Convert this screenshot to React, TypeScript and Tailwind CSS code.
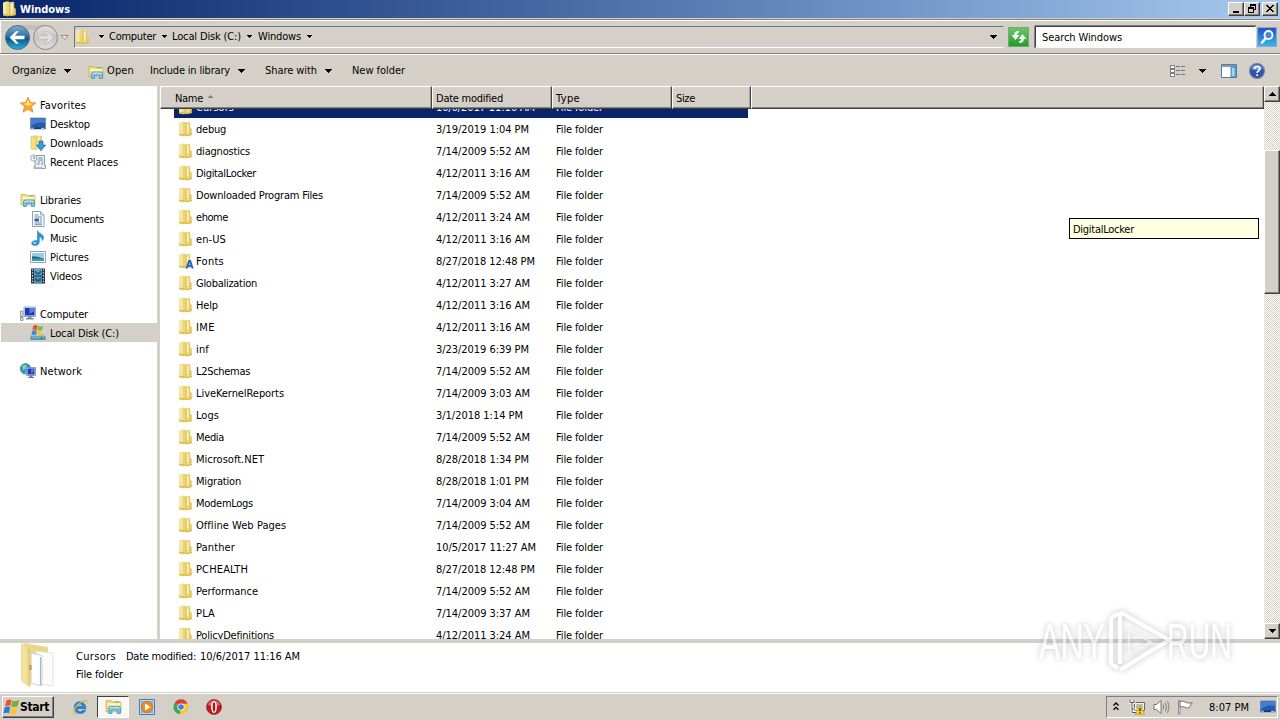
import { useLayoutEffect, useRef, useState } from 'react'
import type { ReactNode } from 'react'

const folders = [
  { name: 'Cursors', w: 38, date: '10/6/2017 11:16 AM', dw: 99, selected: true },
  { name: 'debug', w: 30, date: '3/19/2019 1:04 PM', dw: 93 },
  { name: 'diagnostics', w: 54, date: '7/14/2009 5:52 AM', dw: 94 },
  { name: 'DigitalLocker', w: 60, date: '4/12/2011 3:16 AM', dw: 94 },
  { name: 'Downloaded Program Files', w: 127, date: '7/14/2009 5:52 AM', dw: 94 },
  { name: 'ehome', w: 32, date: '4/12/2011 3:24 AM', dw: 94 },
  { name: 'en-US', w: 30, date: '4/12/2011 3:16 AM', dw: 94 },
  { name: 'Fonts', w: 28, date: '8/27/2018 12:48 PM', dw: 99, font: true },
  { name: 'Globalization', w: 61, date: '4/12/2011 3:27 AM', dw: 94 },
  { name: 'Help', w: 22, date: '4/12/2011 3:16 AM', dw: 94 },
  { name: 'IME', w: 19, date: '4/12/2011 3:16 AM', dw: 94 },
  { name: 'inf', w: 13, date: '3/23/2019 6:39 PM', dw: 93 },
  { name: 'L2Schemas', w: 54, date: '7/14/2009 5:52 AM', dw: 94 },
  { name: 'LiveKernelReports', w: 88, date: '7/14/2009 3:03 AM', dw: 94 },
  { name: 'Logs', w: 23, date: '3/1/2018 1:14 PM', dw: 87 },
  { name: 'Media', w: 28, date: '7/14/2009 5:52 AM', dw: 94 },
  { name: 'Microsoft.NET', w: 68, date: '8/28/2018 1:34 PM', dw: 93 },
  { name: 'Migration', w: 45, date: '8/28/2018 1:01 PM', dw: 93 },
  { name: 'ModemLogs', w: 57, date: '7/14/2009 3:04 AM', dw: 94 },
  { name: 'Offline Web Pages', w: 90, date: '7/14/2009 5:52 AM', dw: 94 },
  { name: 'Panther', w: 39, date: '10/5/2017 11:27 AM', dw: 100 },
  { name: 'PCHEALTH', w: 52, date: '8/27/2018 12:48 PM', dw: 99 },
  { name: 'Performance', w: 62, date: '7/14/2009 5:52 AM', dw: 94 },
  { name: 'PLA', w: 19, date: '7/14/2009 3:37 AM', dw: 94 },
  { name: 'PolicyDefinitions', w: 78, date: '4/12/2011 3:24 AM', dw: 94 },
]

type LabelProps = { w: number; children: string; className?: string; high?: boolean }

// Keeps every label at a fixed width by spreading its letters
function Label({ w, children, className = '', high }: LabelProps) {
  const ref = useRef<HTMLSpanElement>(null)
  const [spacing, setSpacing] = useState(0)

  useLayoutEffect(() => {
    if (!ref.current) return
    const natural = ref.current.getBoundingClientRect().width
    setSpacing((w - natural) / children.length)
  }, [w, children])

  return (
    <span
      ref={ref}
      className={`inline-block whitespace-pre ${high ? '' : 'pt-[2px]'} ${className}`}
      style={{ letterSpacing: `${spacing}px` }}
    >
      {children}
    </span>
  )
}

function Caret({ small }: { small?: boolean }) {
  return small ? (
    <svg width="5" height="3" viewBox="0 0 5 3" shapeRendering="crispEdges"><path d="M0 0h5v1H4v1H3v1H2V2H1V1H0z" /></svg>
  ) : (
    <svg width="7" height="4" viewBox="0 0 7 4" shapeRendering="crispEdges"><path d="M0 0h7v1H6v1H5v1H4v1H3V3H2V2H1V1H0z" /></svg>
  )
}

function FolderIcon({ font, size = 16 }: { font?: boolean; size?: number }) {
  return (
    <svg width={size} height={size} viewBox="0 0 16 16" className="shrink-0">
      <path d="M1 1.500 5.500.3 7.500 1v13.500l-2 .7L1 14.200z" fill="#f6e8a4" />
      <path d="M4.500 1 7.500 1v13.500l-3 .3z" fill="#ebd67c" />
      <path d="M1 12.500 7.500 13.500v1l-2 .7L1 14.200z" fill="#dcc052" />
      <path d="M7.500 1.500 11 .8l1 .5V14l-4.500 1.200z" fill="#f0dc84" />
      <path d="M7.500 1.500 8.300 1.300V15l-.8.2z" fill="#d0b248" />
      <path d="M11 1.500 12.200 1.500v5l1.600 1.500v6l-2.800.6z" fill="#e2ca66" />
      <path d="M9 3h1.500v8H9z" fill="#faf2bd" />
      <path d="m8 15.200 5.800-1.200v-1L8 14z" fill="#d6b53d" />
      {font && <path d="m7.500 15.500 3-8.500h2.200l3 8.500h-2l-.6-1.800h-3l-.6 1.800zM10.700 12h1.800l-.9-2.700z" fill="#1f62c9" />}
    </svg>
  )
}

function LibraryIcon({ size = 16 }: { size?: number }) {
  return (
    <svg width={size} height={size} viewBox="0 0 16 16" className="shrink-0">
      <path d="M1 2.500h5l1 1.300h8V13H1z" fill="#f1db76" stroke="#c9a94a" strokeWidth=".7" />
      <path d="M2 4.800h12.400V7H2z" fill="#fbf4c4" />
      <path d="M9 3.200h4.500v1H9z" fill="#79b850" />
      <path d="M3.500 14.500V9.800Q3.500 8 5.500 8h7q2 0 2 1.800v4.700h-3v-3.200h-5v3.200z" fill="#74c3e8" stroke="#3d8dbd" strokeWidth=".7" />
      <path d="M4.500 9.500q4-1 9 0" stroke="#d5f1fb" fill="none" />
    </svg>
  )
}

function StarIcon() {
  return (
    <svg width="16" height="16" viewBox="0 0 16 16">
      <path d="m8 .4 2.200 5.100 5.500.5-4.200 3.600 1.400 5.500L8 12.200l-4.900 2.900 1.400-5.500L.3 6l5.500-.5z" fill="#fbae2c" stroke="#e0801c" strokeWidth=".8" />
      <path d="M8 2.500 9.500 6.500l4 .3-5 1.700-5.500-1.700 3.500-.3z" fill="#ffe794" />
    </svg>
  )
}

function DesktopIcon() {
  return (
    <svg width="16" height="16" viewBox="0 0 16 16">
      <path d="M.5 2h15v11H.5z" fill="#2459ad" stroke="#6d87ad" strokeWidth=".8" />
      <path d="M1 2.500h14V7Q7 5 1 10z" fill="#427fd1" />
      <path d="M1 11.500h14V13H1z" fill="#18386f" />
      <path d="M1 11.500h3V13H1z" fill="#5eb5e2" />
      <path d="M11 11.800h3.500v1H11z" fill="#d0def0" />
    </svg>
  )
}

function DownloadsIcon() {
  return (
    <svg width="16" height="16" viewBox="0 0 16 16">
      <path d="M1 1.500 6 .5v14l-5-.5z" fill="#f3df87" stroke="#cfb14d" strokeWidth=".5" />
      <path d="M6 1h6v12.500L6 14.500z" fill="#e9cf67" />
      <path d="M7.500 2.500 10 1v12l-2.500 1z" fill="#faeeae" />
      <path d="M9 6h4v4h2.700L11 15.700 6.500 10H9z" fill="#349be1" stroke="#1567ac" strokeWidth=".7" />
    </svg>
  )
}

function RecentIcon() {
  return (
    <svg width="16" height="16" viewBox="0 0 16 16">
      <path d="M5 1.500h9.500v10h1V14.500H4v-2h1z" fill="#e6edf4" stroke="#758595" strokeWidth=".8" />
      <path d="M8.500 4h4M8 6h5M8 8h2M11.500 8h1.500M7 10h2.500M11 10h2" stroke="#6e8599" strokeWidth=".9" />
      <circle cx="3.800" cy="4" r="3.200" fill="#f4f7fa" stroke="#8494a5" strokeWidth=".8" />
      <path d="M3.800 2v2.200h1.500" fill="none" stroke="#506478" strokeWidth=".8" />
      <path d="M4 13h8.500v1.500H4z" fill="#b4c4d2" />
    </svg>
  )
}

function DocumentsIcon() {
  return (
    <svg width="16" height="16" viewBox="0 0 16 16">
      <path d="M2.500.5h8l3.500 3.500v11.500H2.500z" fill="#fafcff" stroke="#7e96ad" strokeWidth=".9" />
      <path d="M10.500.5V4H14" fill="#cddcec" stroke="#7e96ad" strokeWidth=".7" />
      <path d="M4.500 4h4M4.500 6h7.500M4.500 12h7.500M4.500 13.700h7.500M10 8h2M10 10h2" stroke="#5b85b0" strokeWidth=".9" />
      <path d="M4.500 7.500h4.500v3H4.500z" fill="#31679f" />
    </svg>
  )
}

function MusicIcon() {
  return (
    <svg width="16" height="16" viewBox="0 0 16 16">
      <path d="M7.500.5c.5 3 6 3.500 6 7 0 1.500-.8 2.500-1.500 3.200.6-2.700-1-3.400-2.700-3.900V12c0 2.500-2 3.500-4.300 3.500s-3.300-1-3.300-2.300c0-1.700 2.700-3.200 5.800-2.400z" fill="#2f94d6" stroke="#1e6fae" strokeWidth=".5" />
      <ellipse cx="4.700" cy="12.800" rx="1.800" ry="1.100" fill="#8bd0f5" />
    </svg>
  )
}

function PicturesIcon() {
  return (
    <svg width="16" height="16" viewBox="0 0 16 16">
      <path d="M.5 2.500h15v11H.5z" fill="#fff" stroke="#8297a8" strokeWidth=".9" />
      <path d="M2 4h12v8H2z" fill="#91cfeb" />
      <path d="M2 7.500q5-1 12 2.500H2z" fill="#1e6d73" />
      <path d="M2 9.500h12V12H2z" fill="#3b9cae" />
    </svg>
  )
}

function VideosIcon() {
  return (
    <svg width="16" height="16" viewBox="0 0 16 16">
      <path d="M1 .5h14v15H1z" fill="#25303c" />
      <path d="M4 1h8v6.500H4z" fill="#5aa6cf" />
      <path d="M4 8.500h8V15H4z" fill="#4a96c8" />
      <path d="m5 2 3 3 3-3v3L8 7 5 5zM5 9.500l3 2 3-2v3L8 14l-3-1.500z" fill="#2c5c7c" />
      <path d="M2.500 1.500v13.500M13.500 1.500v13.500" stroke="#e7edf2" strokeWidth="1.200" strokeDasharray="1.300 1.500" />
    </svg>
  )
}

function ComputerIcon() {
  return (
    <svg width="16" height="16" viewBox="0 0 16 16">
      <path d="M.5 5h2.500v9.500H.5z" fill="#d4dbd9" stroke="#7d8a90" strokeWidth=".7" />
      <path d="M1 10h1.600v2H1z" fill="#55a45e" />
      <path d="M4 1h11.500v9.500H4z" fill="#dfe4f0" stroke="#8994b0" strokeWidth=".8" />
      <path d="M5 2h9.500v7.500H5z" fill="#1f36b8" />
      <path d="M9.500 2h5v3l-5 3z" fill="#5b7ee4" />
      <path d="M8 10.500h3.500v1.500h2v1.500h-7.500V12H8z" fill="#7d89a0" />
    </svg>
  )
}

function DiskIcon() {
  return (
    <svg width="16" height="16" viewBox="0 0 16 16">
      <path d="m2 9-1.500 3v2.500h15V12L13.500 9z" fill="#a5c1cc" />
      <path d="M.5 11.500h15v3.300H.5z" fill="#3f87a2" />
      <path d="M1.500 12.500h9v.8h-9z" fill="#a9dbe9" />
      <path d="M12.500 12.300h1.800v1.200h-1.800z" fill="#7be07a" />
      <path d="M3.200.8Q5.700-.6 7.700.7L6.900 5Q4.900 4 2.400 5.200z" fill="#e2562a" />
      <path d="M8.500 1q2.200 1 4.500-.3L12.200 5q-2.300 1.300-4.500.3z" fill="#7fba3b" />
      <path d="M2.200 6q2.300-1.200 4.500-.2L5.900 10Q3.900 9 1.400 10.200z" fill="#3a86d8" />
      <path d="M7.500 6.200q2.200 1 4.500-.2l-.8 4.200q-2.300 1.300-4.500.2z" fill="#f7c52f" />
    </svg>
  )
}

function NetworkIcon() {
  return (
    <svg width="16" height="16" viewBox="0 0 16 16">
      <circle cx="5.500" cy="5.800" r="5.200" fill="#3095c8" stroke="#1f6f9f" strokeWidth=".6" />
      <path d="M2 3q3-2.500 5 0L5.500 6 3 7zM5 8l2 1-1.500 2z" fill="#7dd392" />
      <path d="M6.500 4.500h9v8h-9z" fill="#dde4f1" stroke="#7785a6" strokeWidth=".8" />
      <path d="M7.500 5.500h7v6h-7z" fill="#1c35bb" />
      <path d="M11 5.500h3.500V8L11 11z" fill="#4b76df" />
      <path d="M9.500 12.500h3V14h1.500v1H8v-1h1.500z" fill="#6e7c95" />
    </svg>
  )
}

function WindowsFlag() {
  return (
    <svg width="17" height="16" viewBox="0 0 17 16" className="shrink-0">
      <path d="M3.500 1.300Q6-.2 8.600 1.200L7.400 7Q5 6 2.100 7.300z" fill="#e8582a" />
      <path d="M9.500 1.600q2.700 1.300 6.700-.6l-1.500 6.300q-3.200 1.500-6.400.2z" fill="#72b33a" />
      <path d="M1.900 8.300q2.800-1.300 5.300-.2L6 14.200Q3.500 13 .3 14.500z" fill="#2f7bd3" />
      <path d="M8 8.600q3 1.300 6.400-.2L13.100 14.500q-3.200 1.700-6.400.3z" fill="#f8c62c" />
    </svg>
  )
}

type SideRow = { label: string; w: number; icon: ReactNode; root?: boolean; active?: boolean }

const sidebar: SideRow[][] = [
  [
    { label: 'Favorites', w: 46, icon: <StarIcon />, root: true },
    { label: 'Desktop', w: 40, icon: <DesktopIcon /> },
    { label: 'Downloads', w: 53, icon: <DownloadsIcon /> },
    { label: 'Recent Places', w: 68, icon: <RecentIcon /> },
  ],
  [
    { label: 'Libraries', w: 41, icon: <LibraryIcon />, root: true },
    { label: 'Documents', w: 54, icon: <DocumentsIcon /> },
    { label: 'Music', w: 27, icon: <MusicIcon /> },
    { label: 'Pictures', w: 39, icon: <PicturesIcon /> },
    { label: 'Videos', w: 32, icon: <VideosIcon /> },
  ],
  [
    { label: 'Computer', w: 48, icon: <ComputerIcon />, root: true },
    { label: 'Local Disk (C:)', w: 69, icon: <DiskIcon />, active: true },
  ],
  [{ label: 'Network', w: 42, icon: <NetworkIcon />, root: true }],
]

const raised = 'border border-t-white border-l-white border-r-[#404040] border-b-[#404040] bg-[#d4d0c8] shadow-[inset_-1px_-1px_0_#808080]'

function TitleBar() {
  return (
    <div className="flex h-[18px] items-center bg-linear-to-r from-[#0a246a] to-[#a6caf0] pl-[2px] pr-0.5">
      <FolderIcon />
      <Label w={50} className="ml-[2px] text-[11px] font-bold text-white">Windows</Label>
      <div className="ml-auto flex">
        <div className={`flex h-[14px] w-4 items-center justify-center ${raised}`}>
          <svg width="12" height="10" viewBox="0 0 12 10" shapeRendering="crispEdges"><path d="M3 7h6v2H3z" /></svg>
        </div>
        <div className={`flex h-[14px] w-4 items-center justify-center ${raised}`}>
          <svg width="12" height="10" viewBox="0 0 12 10" shapeRendering="crispEdges">
            <path d="M4 0h6v6H8V5h1V2H5v1H4zM2 3h6v6H2zm1 2v3h4V5z" fillRule="evenodd" />
          </svg>
        </div>
        <div className={`ml-0.5 flex h-[14px] w-4 items-center justify-center ${raised}`}>
          <svg width="12" height="10" viewBox="0 0 12 10" shapeRendering="crispEdges">
            <path d="M2 1h2v1h1v1h2V2h1V1h2v1H9v1H8v1H7v1h1v1h1v1h1v1H8V7H7V6H5v1H4v1H2V7h1V6h1V5h1V4H4V3H3V2H2z" />
          </svg>
        </div>
      </div>
    </div>
  )
}

function AddressBar() {
  return (
    <div className="flex h-9 items-center border-t border-b border-t-[#808080] border-b-white shadow-[inset_0_1px_0_#fff,inset_0_-1px_0_#808080,inset_1px_0_0_#fff] pl-1">
      <svg width="66" height="28" viewBox="0 0 66 28" className="shrink-0">
        <defs>
          <linearGradient id="back" x1="0" y1="0" x2="0" y2="1">
            <stop offset="0" stopColor="#86a9c6" />
            <stop offset=".48" stopColor="#2872a7" />
            <stop offset=".52" stopColor="#095287" />
            <stop offset="1" stopColor="#29b3dd" />
          </linearGradient>
          <linearGradient id="forward" x1="0" y1="0" x2="0" y2="1">
            <stop offset="0" stopColor="#e4e2df" />
            <stop offset=".5" stopColor="#c6c4c2" />
            <stop offset="1" stopColor="#e2e0dc" />
          </linearGradient>
        </defs>
        <path d="M14 2h28v5H14z" fill="#c2c0bc" />
        <circle cx="13.500" cy="14.500" r="12" fill="url(#back)" stroke="#526b80" />
        <path d="M5.500 14.500 12 8.300h2.800l-3.900 4.500h9.600v3.400h-9.600l3.900 4.500H12z" fill="#fff" />
        <circle cx="41.500" cy="14.500" r="12" fill="url(#forward)" stroke="#8c8a88" />
        <path d="m49.500 14.500-6.500-6.200h-2.800l3.900 4.500h-9.600v3.400h9.600l-3.900 4.500H43z" fill="#e4e2e0" stroke="#b6b4b2" strokeWidth=".6" />
        <path d="M57 12.500h7l-3.500 4z" fill="#eee" stroke="#777" strokeWidth=".8" />
      </svg>
      <div className="ml-1 flex h-[22px] w-[930px] items-center border border-t-[#69778a] border-l-[#69778a] border-b-white border-r-[#d4d0c8]">
        <FolderIcon />
        <span className="mb-px ml-2"><Caret small /></span>
        <Label high w={47} className="ml-[5px]">Computer</Label>
        <span className="mb-px ml-[6px]"><Caret small /></span>
        <Label high w={69} className="ml-[5px]">Local Disk (C:)</Label>
        <span className="mb-px ml-[6px]"><Caret small /></span>
        <Label high w={43} className="ml-[6px]">Windows</Label>
        <span className="mb-px ml-[6px]"><Caret small /></span>
        <span className="ml-auto mr-[6px]"><Caret /></span>
      </div>
      <div className="ml-1 flex h-5 w-[21px] items-center justify-center border border-[#76a876] bg-linear-to-b from-[#6bc36b] to-[#1d9d23]">
        <svg width="18" height="18" viewBox="0 0 18 18">
          <path d="M9 3Q4.500 2.500 4 7H1.500L5.500 12l4-5H7q.2-2 2-2.500z" fill="#efffec" />
          <path d="M9 15q4.500.5 5-4h2.500L12.500 6l-4 5H11q-.2 2-2 2.500z" fill="#efffec" />
        </svg>
      </div>
      <div className="ml-[6px] flex h-[22px] w-[221px] items-center border border-t-[#404040] border-l-[#404040] border-b-white border-r-white bg-white pl-[6px] shadow-[-1px_0_0_#808080,0_-1px_0_#808080]">
        <Label w={80}>Search Windows</Label>
      </div>
      <div className="ml-px flex h-5 w-5 items-center justify-center border border-[#8ba7d4] bg-linear-to-b from-[#2b4fc0] to-[#37b5ec]">
        <svg width="18" height="18" viewBox="0 0 18 18">
          <path d="m8 10-4 4.500" stroke="#fff" strokeWidth="2.500" strokeLinecap="round" />
          <circle cx="10.500" cy="7" r="4" fill="#4c86d9" stroke="#fff" strokeWidth="1.800" />
        </svg>
      </div>
    </div>
  )
}

function Toolbar() {
  return (
    <div className="flex h-[31px] items-center pl-3">
      <Label high w={44}>Organize</Label>
      <span className="ml-2"><Caret /></span>
      <span className="ml-[17px] mt-0.5"><LibraryIcon /></span>
      <Label high w={27} className="ml-[3px]">Open</Label>
      <Label high w={80} className="ml-4">Include in library</Label>
      <span className="ml-2"><Caret /></span>
      <Label high w={52} className="ml-5">Share with</Label>
      <span className="ml-2"><Caret /></span>
      <Label high w={53} className="ml-5">New folder</Label>
      <div className="ml-auto flex items-center pr-[15px]">
        <svg width="16" height="14" viewBox="0 0 16 14" shapeRendering="crispEdges">
          <path d="M0 1h5v12H0z" fill="#7b8088" />
          <path d="M1 2h3v2H1zM1 6h3v2H1zM1 10h3v2H1z" fill="#fff" />
          <path d="M6 2h4v1H6zM11 2h4v1h-4zM6 6h4v1H6zM11 6h4v1h-4zM6 10h4v1H6zM11 10h4v1h-4z" fill="#6b7785" />
        </svg>
        <span className="ml-[13px]"><Caret /></span>
        <svg width="16" height="14" viewBox="0 0 16 14" className="ml-[15px]">
          <path d="M.5.500h15v13H.5z" fill="#fff" stroke="#507ba5" />
          <path d="M1 1h14v2H1z" fill="#7b9ebd" />
          <path d="M10 3h5v10h-5z" fill="#75bedd" stroke="#3c7c9f" strokeWidth=".8" />
          <path d="M11.500 4h1v8h-1z" fill="#d3effa" />
        </svg>
        <svg width="16" height="16" viewBox="0 0 16 16" className="ml-3">
          <circle cx="8" cy="8" r="7.400" fill="#2f52b5" stroke="#6e7f9d" strokeWidth="1.200" />
          <path d="M2.500 6Q3 2 8 2t5.500 4Q8 8 2.500 6z" fill="#7b9be0" />
          <path d="M5.500 6q0-2.500 2.600-2.500T10.700 6q0 1.200-1.300 2-1.200.6-1.200 2M8.200 11.300v1.600" fill="none" stroke="#fff" strokeWidth="1.700" />
        </svg>
      </div>
    </div>
  )
}

function Sidebar() {
  return (
    <div className="w-[157px] shrink-0 space-y-[19px] bg-white pt-[9px]">
      {sidebar.map((group, g) => (
        <div key={g}>
          {group.map((row) => (
            <div
              key={row.label}
              className={`flex h-[19px] items-center ${row.active ? 'ml-px bg-[#d4d0c8] pl-[29px]' : row.root ? 'pl-5' : 'pl-[30px]'}`}
            >
              {row.icon}
              <Label w={row.w} className="ml-1">{row.label}</Label>
            </div>
          ))}
        </div>
      ))}
    </div>
  )
}

function ColumnHeader({ className, children }: { className: string; children?: ReactNode }) {
  return (
    <div className={`flex h-full items-center border-t border-l border-r border-b border-t-white border-l-white border-r-[#404040] border-b-[#404040] shadow-[inset_0_-1px_0_#808080,inset_-1px_0_0_#a8a59f] ${className}`}>
      {children}
    </div>
  )
}

function FileList() {
  return (
    <div className="flex min-w-0 flex-1 flex-col overflow-hidden bg-white">
      <div className="flex h-[23px] shrink-0 bg-[#d4d0c8]">
        <ColumnHeader className="w-[272px] pl-[14px]">
          <Label w={28}>Name</Label>
          <svg width="5" height="3" viewBox="0 0 5 3" className="mb-[2px] ml-[5px]" shapeRendering="crispEdges">
            <path d="M2 0h1v1h1v1h1v1H0V2h1V1h1z" fill="#808080" />
          </svg>
        </ColumnHeader>
        <ColumnHeader className="w-[120px] pl-[3px]"><Label w={67}>Date modified</Label></ColumnHeader>
        <ColumnHeader className="w-[120px] pl-[3px]"><Label w={24}>Type</Label></ColumnHeader>
        <ColumnHeader className="w-[79px] pl-[3px]"><Label w={19}>Size</Label></ColumnHeader>
        <ColumnHeader className="flex-1" />
      </div>
      <div className="min-h-0 flex-1 overflow-hidden">
        <div className="-mt-[13px] pl-[14px]">
          {folders.map((f) => (
            <div key={f.name} className={`flex h-[22px] w-[574px] items-center pl-1 ${f.selected ? 'bg-[#0a246a] text-white' : ''}`}>
              <div className="flex w-[258px] items-center">
                <span className="mb-px"><FolderIcon font={f.font} /></span>
                <Label w={f.w} className="ml-[2px]">{f.name}</Label>
              </div>
              <div className="flex w-[120px]"><Label w={f.dw}>{f.date}</Label></div>
              <Label w={47}>File folder</Label>
            </div>
          ))}
        </div>
      </div>
    </div>
  )
}

function ScrollBar() {
  return (
    <div className="flex w-4 shrink-0 flex-col bg-[#d4d0c8] bg-[repeating-conic-gradient(#fff_0_25%,#d4d0c8_0_50%)] bg-[length:2px_2px]">
      <div className={`flex h-4 items-center justify-center ${raised}`}>
        <svg width="7" height="4" viewBox="0 0 7 4" shapeRendering="crispEdges"><path d="M3 0h1v1h1v1h1v1h1v1H0V3h1V2h1V1h1z" /></svg>
      </div>
      <div className={`mt-12 h-36 ${raised}`} />
      <div className={`mt-auto flex h-4 items-center justify-center ${raised}`}><Caret /></div>
    </div>
  )
}

function DetailsPane() {
  return (
    <div className="flex h-[49px] bg-white pl-5">
      <svg width="36" height="46" viewBox="0 0 36 46" className="shrink-0">
        <path d="m4 0 24 4v8L10 40z" fill="#ebd78a" />
        <path d="m16 8 17 2v33l-13-2z" fill="#fcfcfc" stroke="#dcdcdc" strokeWidth=".8" />
        <path d="m11 10 9 2q2 .5 2 2v29l-11-3z" fill="#fff" stroke="#c6ced8" strokeWidth=".9" />
        <path d="M20.500 14v28" stroke="#a9b3bf" strokeWidth="1.200" />
        <path d="M1.500.500 10 6v38l-8.500-6z" fill="#f3e29a" stroke="#e3cf80" strokeWidth=".6" />
        <path d="M7.500 4.500 10.500 6v37.500l-3-1.500z" fill="#e4cf80" />
        <path d="M9.500 22h2v5h-2z" fill="#b69544" />
      </svg>
      <div className="ml-5 flex flex-col pt-[4px]">
        <div className="flex h-[18px] items-center">
          <Label w={40}>Cursors</Label>
          <Label w={70} className="ml-[10px]">Date modified:</Label>
          <Label w={100} className="ml-1">10/6/2017 11:16 AM</Label>
        </div>
        <div className="flex h-[18px] items-center"><Label w={47}>File folder</Label></div>
      </div>
    </div>
  )
}

function Taskbar() {
  return (
    <div className="flex h-[28px] items-center border-t border-[#d4d0c8] bg-[#d4d0c8] pl-0.5 pr-0.5 shadow-[inset_0_1px_0_#fff]">
      <div className={`flex h-[22px] w-[52px] items-center ${raised}`}>
        <WindowsFlag />
        <Label high w={29} className="pt-px text-[12px] font-bold">Start</Label>
      </div>
      <svg width="16" height="16" viewBox="0 0 16 16" className="ml-[18px]">
        <path d="M14 9.700H5.300c.3 3.500 4.200 3.700 5.400 1.500h3c-1.800 5-11.500 4.500-11.500-2.700 0-8 11.800-7.800 11.800 1.200zM5.400 7.300h5.300c-.3-3-5-3-5.300 0z" fill="#2a83d5" stroke="#145aa5" strokeWidth=".5" />
        <path d="M14.800 4.500c1.200-3-1.500-4.200-6.300-1C4 6.500.5 12.500 2 14.300c.8 1 2.500.2 3.500-.4" fill="none" stroke="#d6bd42" strokeWidth="1.200" />
      </svg>
      <div className="ml-[9px] flex h-[22px] w-8 items-center justify-center border border-t-[#404040] border-l-[#404040] border-b-white border-r-white bg-[repeating-conic-gradient(#fff_0_25%,#f3f1ee_0_50%)] bg-[length:2px_2px]">
        <LibraryIcon size={17} />
      </div>
      <svg width="16" height="16" viewBox="0 0 16 16" className="ml-[10px]">
        <path d="M.5.500h15v15H.5z" fill="#b6d8f2" stroke="#427fb8" />
        <path d="M2 2h12v12H2z" fill="#83b7e1" />
        <circle cx="8" cy="8" r="5.500" fill="#f28a1c" stroke="#d7670c" strokeWidth=".8" />
        <path d="m6 4.500 5.500 3.500L6 11.500z" fill="#fff" />
      </svg>
      <svg width="16" height="16" viewBox="0 0 16 16" className="ml-[18px]">
        <path d="M8 8 1.500 4.200A7.300 7.300 0 0 1 14.600 4.700z" fill="#da3e31" />
        <path d="M8 8H8L7 15.300A7.300 7.300 0 0 1 1.500 4.200z" fill="#3fa652" />
        <path d="M8 8V4.700h6.600A7.300 7.300 0 0 1 7 15.300z" fill="#f5c92e" />
        <circle cx="8" cy="8" r="3.600" fill="#fff" />
        <circle cx="8" cy="8" r="2.800" fill="#3d7fe4" />
      </svg>
      <svg width="16" height="16" viewBox="0 0 16 16" className="ml-[17px]">
        <circle cx="8" cy="8" r="7.500" fill="#c31a1e" stroke="#8e1014" strokeWidth=".6" />
        <path d="M2 6Q3 1.500 8 1.500T14 6Q8 8 2 6z" fill="#e2696a" />
        <ellipse cx="8" cy="8" rx="2.900" ry="6" fill="#fff" />
        <ellipse cx="8" cy="8" rx="1.300" ry="4.800" fill="#a9161a" />
      </svg>
      <div className="ml-auto flex h-[22px] w-[172px] items-center border border-t-[#808080] border-l-[#808080] border-b-white border-r-white pl-[6px]">
        <svg width="6" height="9" viewBox="0 0 6 9"><path d="m.5 3.500 2.500-2.500 2.500 2.500M.5 7.800l2.500-2.500 2.500 2.500" fill="none" stroke="#000" strokeWidth="1.300" /></svg>
        <svg width="16" height="16" viewBox="0 0 16 16" className="ml-[10px]">
          <path d="M5.500 3.500h10v8h-10z" fill="#f1f1ee" stroke="#666" />
          <path d="M7 5h7v5H7z" fill="#bcbcb8" />
          <path d="M1 .5v3h4v-3M3 3.500v9.500h6M3 10h3" fill="none" stroke="#fff" strokeWidth="2.600" />
          <path d="M1 .5v3h4v-3M3 3.500v10h6M3 10h3" fill="none" stroke="#555" />
          <path d="m11 6.500 4.700 8.800H6.300z" fill="#fbd821" stroke="#b58e09" strokeWidth=".6" />
          <path d="M11 9.300v3M11 13.300v1.200" stroke="#000" strokeWidth="1.200" />
        </svg>
        <svg width="17" height="16" viewBox="0 0 17 16" className="ml-[8px]">
          <path d="M1 5.500h2.500L8 1.500v13L3.500 10.500H1z" fill="#fff" stroke="#666" strokeWidth=".9" />
          <path d="M10 5.500q1.500 2.500 0 5M12.300 3.800q2.500 4.200 0 8.400M14.300 2.300q3.300 5.700 0 11.400" fill="none" stroke="#777" strokeWidth=".9" />
        </svg>
        <svg width="16" height="16" viewBox="0 0 16 16" className="ml-[7px]">
          <path d="M1.500 1.500H3v13.500H1.500z" fill="#fff" stroke="#666" strokeWidth=".7" />
          <path d="M3 2.500q3.500-1 6 .8 2.500 1.500 6.300.4-2 2-3 5-2 .8-4-.4-2.500-1.300-5.300-.3z" fill="#fff" stroke="#666" strokeWidth=".9" />
        </svg>
        <Label w={40} className="ml-[16px]">8:07 PM</Label>
        <span className="ml-[11px]"><DesktopIcon /></span>
      </div>
    </div>
  )
}

function Watermark() {
  return (
    <div className="absolute left-[1036px] top-[606px] h-[68px] w-[200px] opacity-60 drop-shadow-[0_0_3px_#999]">
      <svg width="200" height="68" viewBox="0 0 200 68">
        <g fill="none" stroke="#fff" strokeWidth="4" strokeLinejoin="round">
          <path d="M75 12v46M75 12l7-4M75 58l7 4" />
          <path d="M84 9v49M84 6l49 28-49 30M84 6v8" />
          <path d="M93 24v24l22-12z" stroke="#eee" strokeWidth="2.500" />
        </g>
        <g fill="#fff" fontFamily="'Liberation Sans Narrow', 'Liberation Sans', sans-serif" fontSize="50">
          <text x="3" y="53" textLength="66" lengthAdjust="spacingAndGlyphs">ANY</text>
          <text x="131" y="53" textLength="65" lengthAdjust="spacingAndGlyphs">RUN</text>
        </g>
      </svg>
    </div>
  )
}

export default function App() {
  return (
    <div className="relative flex h-[720px] w-[1280px] flex-col overflow-hidden bg-[#d4d0c8] text-[11px] leading-[14px] text-black [font-family:'DejaVu_Sans_Condensed','DejaVu_Sans',sans-serif]">
      <TitleBar />
      <div className="h-px" />
      <AddressBar />
      <Toolbar />
      <div className="flex h-[553px]">
        <Sidebar />
        <div className="w-[3px] shrink-0 bg-[#d4d0c8]" />
        <FileList />
        <ScrollBar />
      </div>
      <div className="h-1 shrink-0" />
      <DetailsPane />
      <Taskbar />
      <div className="absolute left-[1069px] top-[218px] flex h-[21px] w-[190px] items-center border border-black bg-[#ffffe1] pl-[3px]">
        <Label w={61}>DigitalLocker</Label>
      </div>
      <Watermark />
    </div>
  )
}
